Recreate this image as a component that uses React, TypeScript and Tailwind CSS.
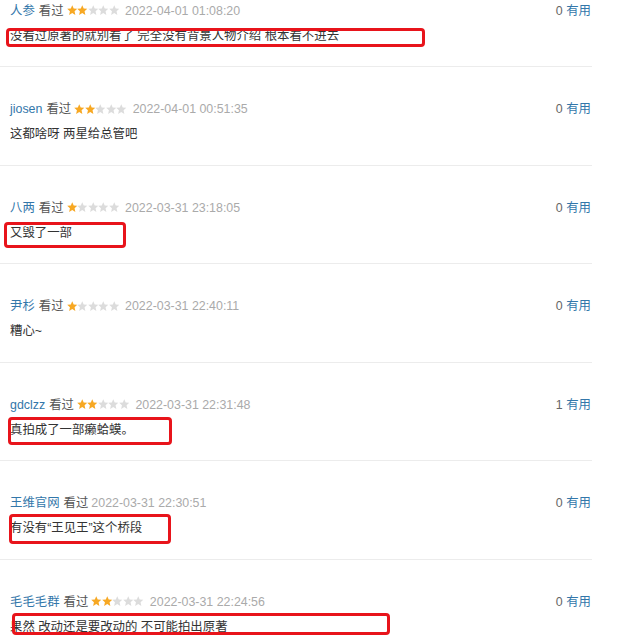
import React from "react";

type Comment = {
  name: string;
  stars: number | null;
  time: string;
  votes: number;
  text: string;
  box?: string;
};

const comments: Comment[] = [
  {
    name: "人参",
    stars: 2,
    time: "2022-04-01 01:08:20",
    votes: 0,
    text: "没看过原著的就别看了 完全没有背景人物介绍 根本看不进去",
    box: "left-[-4px] top-[2px] w-[419px] h-[19px]",
  },
  {
    name: "jiosen",
    stars: 2,
    time: "2022-04-01 00:51:35",
    votes: 0,
    text: "这都啥呀 两星给总管吧",
  },
  {
    name: "八两",
    stars: 1,
    time: "2022-03-31 23:18:05",
    votes: 0,
    text: "又毁了一部",
    box: "left-[-6px] top-[-1px] w-[122px] h-[26px]",
  },
  {
    name: "尹杉",
    stars: 1,
    time: "2022-03-31 22:40:11",
    votes: 0,
    text: "糟心~",
  },
  {
    name: "gdclzz",
    stars: 2,
    time: "2022-03-31 22:31:48",
    votes: 1,
    text: "真拍成了一部癞蛤蟆。",
    box: "left-[-2px] top-[-3px] w-[164px] h-[28px]",
  },
  {
    name: "王维官网",
    stars: null,
    time: "2022-03-31 22:30:51",
    votes: 0,
    text: "有没有“王见王”这个桥段",
    box: "left-[-1px] top-[-4px] w-[162px] h-[30px]",
  },
  {
    name: "毛毛毛群",
    stars: 2,
    time: "2022-03-31 22:24:56",
    votes: 0,
    text: "果然 改动还是要改动的 不可能拍出原著",
    box: "left-[2px] top-[-4px] w-[378px] h-[22px]",
  },
];

const Star = ({ on }: { on: boolean }) => (
  <svg width="10.5" height="10.5" viewBox="0 0 24 24" className="shrink-0">
    <polygon
      points="12,0.5 15.3,8 23.5,8.8 17.3,14.4 19.1,22.8 12,18.5 4.9,22.8 6.7,14.4 0.5,8.8 8.7,8"
      fill={on ? "#f7a823" : "#dcdcdc"}
    />
  </svg>
);

const Stars = ({ count }: { count: number }) => (
  <span className="ml-[3px] flex items-center">
    {[0, 1, 2, 3, 4].map((i) => (
      <Star key={i} on={i < count} />
    ))}
  </span>
);

const Item = ({ c, first }: { c: Comment; first: boolean }) => (
  <div
    className={
      first
        ? "pl-[10px] pr-[1px] pb-[20.5px]"
        : "border-t border-[#ececec] pl-[10px] pr-[1px] pt-[32px] pb-[20.5px]"
    }
  >
    <div className="flex h-[20px] items-center justify-between">
      <div className="flex items-center">
        <span className="text-[#3377aa]">{c.name}</span>
        <span className="ml-[4px] text-[#555]">看过</span>
        {c.stars !== null && <Stars count={c.stars} />}
        <span className={c.stars !== null ? "ml-[6px] text-[#aaa]" : "ml-[3px] text-[#aaa]"}>
          {c.time}
        </span>
      </div>
      <div>
        <span className="text-[#666]">{c.votes}</span>{" "}
        <span className="text-[#3377aa]">有用</span>
      </div>
    </div>
    <div className="relative mt-[5px] h-[20px] leading-[20px] text-[#333]">
      {c.text}
      {c.box && (
        <div
          className={
            "pointer-events-none absolute rounded-[4px] border-[3px] border-[#e8141b] " +
            c.box
          }
        />
      )}
    </div>
  </div>
);

const App = () => {
  return (
    <div
      className="h-[635px] w-[640px] overflow-hidden bg-white pt-[0.5px] text-[12.4px] leading-[20px]"
      style={{ fontFamily: '"Liberation Sans", "Noto Sans CJK SC", sans-serif' }}
    >
      <div className="w-[592px]">
        {comments.map((c, i) => (
          <Item key={i} c={c} first={i === 0} />
        ))}
      </div>
    </div>
  );
};

export default App;
